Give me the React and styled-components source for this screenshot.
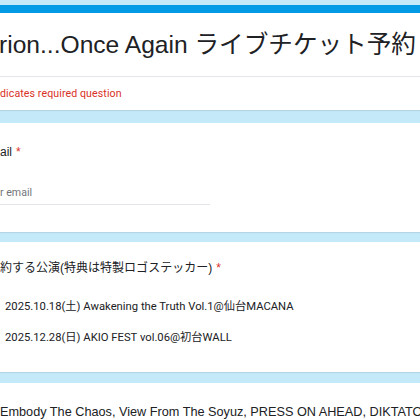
import React from 'react';
import styled, { createGlobalStyle } from 'styled-components';

const GlobalStyle = createGlobalStyle`
  html, body {
    margin: 0;
    padding: 0;
    background: #c4e9f8;
  }
  body {
    width: 420px;
    height: 420px;
    overflow: hidden;
  }
`

const Page = styled.div`
  padding-top: 5px;
  display: flex;
  flex-direction: column;
  width: 420px;
  overflow: hidden;
`

const Card = styled.div`
  background: #fff;
  box-shadow: 0 1px 1px rgba(0, 0, 0, 0.08);
  margin-top: ${p => p.$gap || 0}px;
  padding: ${p => p.$pad || '0'};
  white-space: nowrap;
  overflow: hidden;
`

const TitleCard = styled(Card)`
  border-top: 8px solid #039be5;
`

const TitleRow = styled.div`
  padding: 17px 0 16px;
  border-bottom: 1px solid #e4e6ea;
  font-family: "Liberation Sans", "Noto Sans CJK JP", sans-serif;
  font-size: 24.6px;
  line-height: 30px;
  color: #202124;
  margin-left: -1px;
`

const RequiredNote = styled.div`
  padding: 9px 0 8px;
  font-family: Roboto, "Noto Sans CJK JP", sans-serif;
  font-size: 10.6px;
  line-height: 16px;
  color: #d93025;
  letter-spacing: 0.1px;
`

const QuestionTitle = styled.div`
  font-family: "Liberation Sans", "Noto Sans CJK JP", sans-serif;
  font-size: 12px;
  line-height: 20px;
  color: #202124;
`

const Star = styled.span`
  color: #d93025;
  margin-left: 4px;
`

const TextInput = styled.div`
  margin-top: 21px;
  width: 210px;
  border-bottom: 1px solid #e3e5e8;
  padding-bottom: 1px;
  font-family: Roboto, sans-serif;
  font-size: 10.6px;
  line-height: 20px;
  color: #70757a;
`

const Options = styled.div`
  margin-top: 19px;
  display: flex;
  flex-direction: column;
  gap: 11px;
`

const Option = styled.div`
  padding-left: 5px;
  font-family: Roboto, "Noto Sans CJK JP", sans-serif;
  font-size: 11.25px;
  line-height: 20px;
  color: #202124;
`

const AnswerText = styled.div`
  font-family: "Liberation Sans", "Noto Sans CJK JP", sans-serif;
  font-size: 12.7px;
  line-height: 20px;
  color: #202124;
`

const App = () => {
  return <>
    <GlobalStyle />
    <Page>
      <TitleCard>
        <TitleRow>rion...Once Again ライブチケット予約</TitleRow>
        <RequiredNote>dicates required question</RequiredNote>
      </TitleCard>

      <Card $gap={13} $pad="19px 0 27px">
        <QuestionTitle>ail<Star>*</Star></QuestionTitle>
        <TextInput>r email</TextInput>
      </Card>

      <Card $gap={10} $pad="16px 0 24px">
        <QuestionTitle>約する公演(特典は特製ロゴステッカー)<Star>*</Star></QuestionTitle>
        <Options>
          <Option>2025.10.18(土) Awakening the Truth Vol.1@仙台MACANA</Option>
          <Option>2025.12.28(日) AKIO FEST vol.06@初台WALL</Option>
        </Options>
      </Card>

      <Card $gap={11} $pad="19px 0 20px">
        <AnswerText>Embody The Chaos, View From The Soyuz, PRESS ON AHEAD, DIKTATOR</AnswerText>
      </Card>
    </Page>
  </>
}

export default App;
